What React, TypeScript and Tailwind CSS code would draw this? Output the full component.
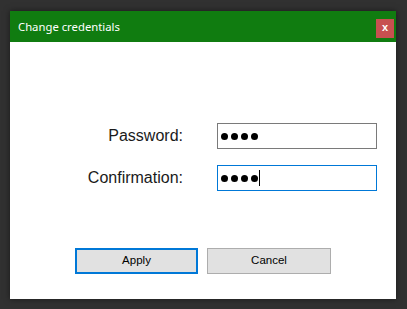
export default function App() {
  return (
    <div className="w-[407px] h-[309px] bg-[#313131] pt-[11px] pl-[10px]">
      <div className="w-[386px] h-[288px] bg-white flex flex-col shadow-[0_0_6px_rgba(0,0,0,0.5)]">
        <div className="h-[31px] bg-[#107c10] flex items-center pl-[8px] pr-[2px]">
          <span className="flex-1 text-white text-[11.3px] pt-[1px] font-['Noto_Sans',sans-serif]">Change credentials</span>
          <div className="self-start mt-[8px] w-[18px] h-[19px] bg-[#c75050] flex items-center justify-center text-white text-[11px] font-bold font-['Liberation_Sans',sans-serif] leading-none pb-[2px]">
            x
          </div>
        </div>
        <div className="flex flex-col gap-[16px] pt-[81px] pr-[19px] font-['Liberation_Sans',Arial,sans-serif]">
          <div className="flex items-center justify-end">
            <span className="text-[16px] text-[#1a1a1a]">Password:</span>
            <div className="ml-[34px] w-[160px] h-[26px] border border-[#7a7a7a] flex items-center pl-[3px] gap-[3px]">
              <Dot /><Dot /><Dot /><Dot />
            </div>
          </div>
          <div className="flex items-center justify-end">
            <span className="text-[16px] text-[#1a1a1a]">Confirmation:</span>
            <div className="ml-[34px] w-[160px] h-[26px] border border-[#0078d7] flex items-center pl-[3px] gap-[3px]">
              <Dot /><Dot /><Dot /><Dot />
              <span className="w-px h-[16px] bg-black -ml-[2px]" />
            </div>
          </div>
        </div>
        <div className="flex gap-[9px] pl-[65px] mt-[57px] font-['Liberation_Sans',Arial,sans-serif] text-[11.5px] text-black">
          <button className="w-[123px] h-[26px] bg-[#e1e1e1] border-2 border-[#0078d7]">Apply</button>
          <button className="w-[124px] h-[26px] bg-[#e1e1e1] border border-[#adadad]">Cancel</button>
        </div>
      </div>
    </div>
  );
}

function Dot() {
  return <span className="w-[7px] h-[7px] rounded-full bg-black" />;
}
